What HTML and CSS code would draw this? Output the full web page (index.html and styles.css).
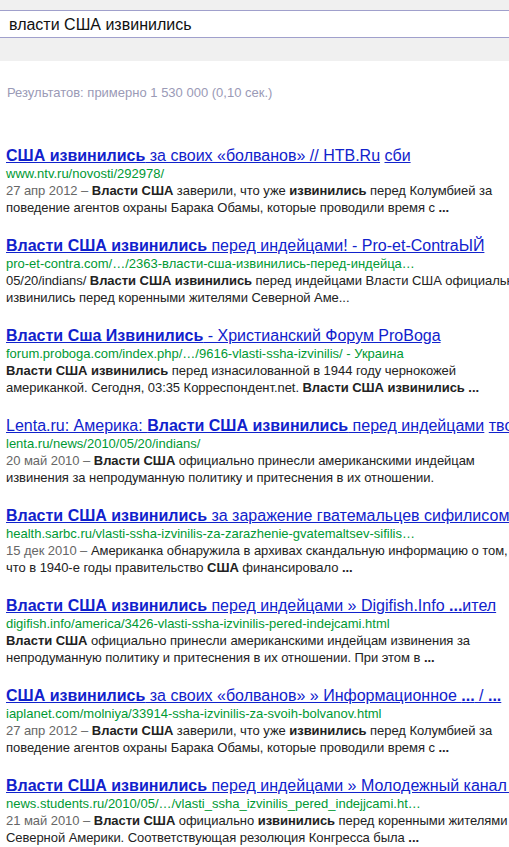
FILE: index.html
```html
<!DOCTYPE html>
<html lang="ru">
<head>
  <meta charset="UTF-8" />
  <meta name="viewport" content="width=device-width, initial-scale=1.0"/>
  <title>власти США извинились - Поиск</title>
  <link rel="stylesheet" href="styles.css">
</head>
<body>
  <div class="searchbar">
    <div class="query">власти США извинились</div>
  </div>

  <div class="stats">Результатов: примерно 1 530 000 (0,10 сек.)</div>

  <div class="results">
    <div class="result">
      <div class="title"><a href="#"><b>США извинились</b> за своих «болванов» // НТВ.Ru</a> <a href="#">сби</a></div>
      <div class="url">www.ntv.ru/novosti/292978/</div>
      <div class="snippet"><span class="date">27 апр 2012 – </span><b>Власти США</b> заверили, что уже <b>извинились</b> перед Колумбией за<br>поведение агентов охраны Барака Обамы, которые проводили время с <b>...</b></div>
    </div>

    <div class="result">
      <div class="title"><a href="#"><b>Власти США извинились</b> перед индейцами! - Pro-et-ContraЫЙ</a></div>
      <div class="url">pro-et-contra.com/…/2363-власти-сша-извинились-перед-индейца…</div>
      <div class="snippet">05/20/indians/ <b>Власти США извинились</b> перед индейцами Власти США официальн<br>извинились перед коренными жителями Северной Аме...</div>
    </div>

    <div class="result">
      <div class="title"><a href="#"><b>Власти Сша Извинились</b> - Христианский Форум ProBoga</a></div>
      <div class="url">forum.proboga.com/index.php/…/9616-vlasti-ssha-izvinilis/ - Украина</div>
      <div class="snippet"><b>Власти США извинились</b> перед изнасилованной в 1944 году чернокожей<br>американкой. Сегодня, 03:35 Корреспондент.net. <b>Власти США извинились ...</b></div>
    </div>

    <div class="result">
      <div class="title"><a href="#">Lenta.ru: Америка: <b>Власти США извинились</b> перед индейцами</a> <a href="#">тво</a></div>
      <div class="url">lenta.ru/news/2010/05/20/indians/</div>
      <div class="snippet"><span class="date">20 май 2010 – </span><b>Власти США</b> официально принесли американскими индейцам<br>извинения за непродуманную политику и притеснения в их отношении.</div>
    </div>

    <div class="result">
      <div class="title"><a href="#"><b>Власти США извинились</b> за заражение гватемальцев сифилисом</a></div>
      <div class="url">health.sarbc.ru/vlasti-ssha-izvinilis-za-zarazhenie-gvatemaltsev-sifilis…</div>
      <div class="snippet"><span class="date">15 дек 2010 – </span>Американка обнаружила в архивах скандальную информацию о том,<br>что в 1940-е годы правительство <b>США</b> финансировало <b>...</b></div>
    </div>

    <div class="result">
      <div class="title"><a href="#"><b>Власти США извинились</b> перед индейцами » Digifish.Info <b>...</b>ител</a></div>
      <div class="url">digifish.info/america/3426-vlasti-ssha-izvinilis-pered-indejcami.html</div>
      <div class="snippet"><b>Власти США</b> официально принесли американскими индейцам извинения за<br>непродуманную политику и притеснения в их отношении. При этом в <b>...</b></div>
    </div>

    <div class="result">
      <div class="title"><a href="#"><b>США извинились</b> за своих «болванов» » Информационное <b>...</b> / <b>...</b></a></div>
      <div class="url">iaplanet.com/molniya/33914-ssha-izvinilis-za-svoih-bolvanov.html</div>
      <div class="snippet"><span class="date">27 апр 2012 – </span><b>Власти США</b> заверили, что уже <b>извинились</b> перед Колумбией за<br>поведение агентов охраны Барака Обамы, которые проводили время с <b>...</b></div>
    </div>

    <div class="result">
      <div class="title"><a href="#"><b>Власти США извинились</b> перед индейцами » Молодежный канал <b>..</b></a></div>
      <div class="url">news.students.ru/2010/05/…/vlasti_ssha_izvinilis_pered_indejjcami.ht…</div>
      <div class="snippet"><span class="date">21 май 2010 – </span><b>Власти США</b> официально <b>извинились</b> перед коренными жителями<br>Северной Америки. Соответствующая резолюция Конгресса была <b>...</b></div>
    </div>
  </div>
</body>
</html>
```

FILE: styles.css
```css
html, body {
  overflow: hidden;
}
body {
  margin: 0;
  font-family: "Liberation Sans", Arial, sans-serif;
  color: #222;
  background: white;
}
.searchbar {
  background: #f0f0f0;
  padding: 10px 0 23px;
}
.query {
  background: white;
  border-top: 1px solid #a0a0cc;
  border-bottom: 1px solid #a0a0cc;
  height: 24px;
  line-height: 24px;
  padding: 2px 0 0 9px;
  font-size: 16px;
  color: #111;
}
.stats {
  margin-top: 23px;
  padding-left: 7px;
  font-size: 13px;
  line-height: 17px;
  color: #9a9ab6;
}
.results {
  margin-top: 45px;
  padding-left: 6px;
}
.result {
  margin-bottom: 20px;
  white-space: nowrap;
}
.title {
  font-size: 16px;
  line-height: 20px;
}
.title a {
  color: #1122cc;
}
.url {
  font-size: 13px;
  line-height: 16px;
  color: #009933;
}
.snippet {
  font-size: 13px;
  line-height: 17px;
  letter-spacing: -0.05px;
  color: #222;
}
.date {
  color: #666;
}
```
